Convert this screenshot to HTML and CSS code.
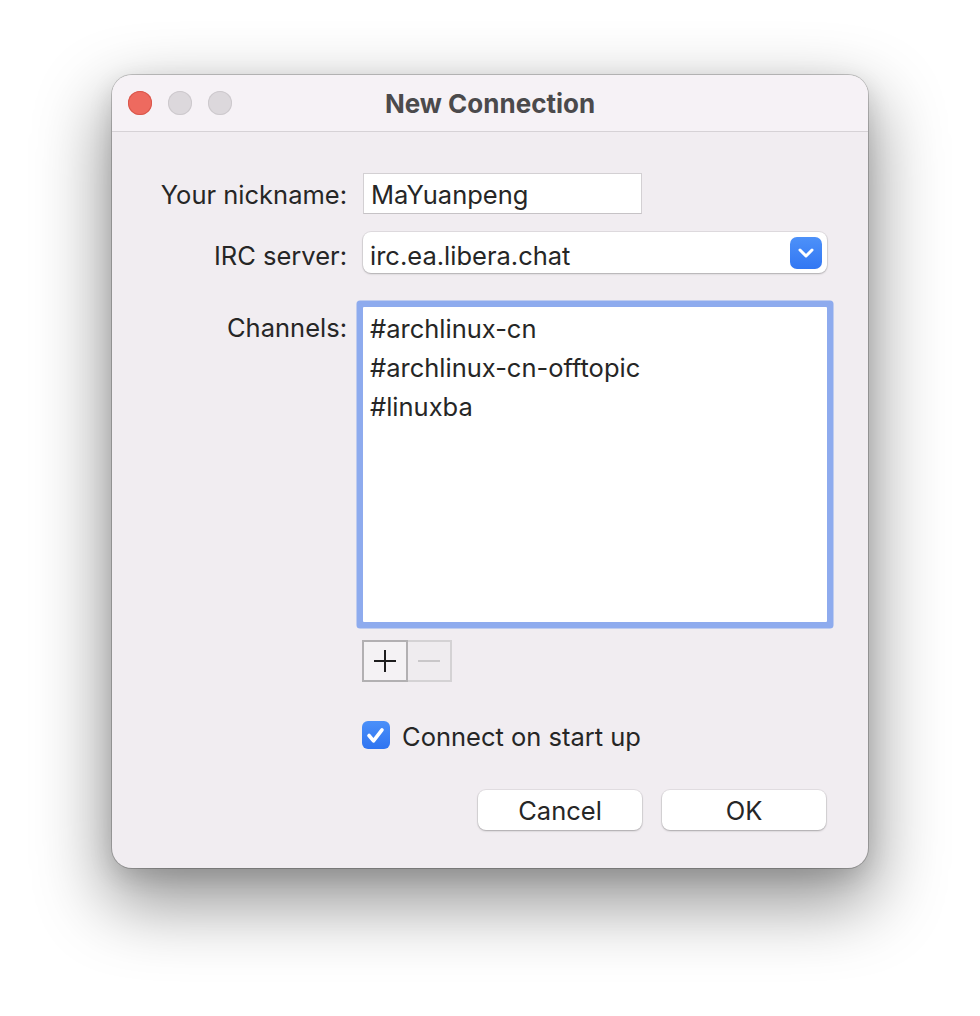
FILE: index.html
```html
<!DOCTYPE html>
<html lang="en">
<head>
<meta charset="utf-8">
<title>New Connection</title>
<link rel="stylesheet" href="styles.css">
</head>
<body>
<div class="stage">
  <div class="window">
    <div class="titlebar">
      <div class="lights">
        <span class="light close"></span>
        <span class="light"></span>
        <span class="light"></span>
      </div>
      <div class="title">New Connection</div>
      <div></div>
    </div>
    <div class="content">
      <div class="row row-nick">
        <div class="label">Your nickname:</div>
        <div class="field nick">MaYuanpeng</div>
      </div>
      <div class="row row-server">
        <div class="label">IRC server:</div>
        <div class="combo">
          <span class="combo-text">irc.ea.libera.chat</span>
          <span class="combo-btn">
            <svg width="16" height="10" viewBox="0 0 16 10"><path d="M2 2 L8 8 L14 2" fill="none" stroke="#fff" stroke-width="3" stroke-linecap="round" stroke-linejoin="round"/></svg>
          </span>
        </div>
      </div>
      <div class="row row-channels">
        <div class="label label-top">Channels:</div>
        <div class="list">
          <div class="item">#archlinux-cn</div>
          <div class="item">#archlinux-cn-offtopic</div>
          <div class="item">#linuxba</div>
        </div>
      </div>
      <div class="row row-tools">
        <div></div>
        <div class="tools">
          <span class="tool plus">
            <svg width="24" height="24" viewBox="0 0 24 24"><path d="M12 1 V23 M1 12 H23" stroke="#1d1d1d" stroke-width="2"/></svg>
          </span>
          <span class="tool minus">
            <svg width="24" height="24" viewBox="0 0 24 24"><path d="M1 12 H23" stroke="#c9c7c9" stroke-width="2"/></svg>
          </span>
        </div>
      </div>
      <div class="row row-check">
        <div></div>
        <div class="check-wrap">
          <span class="checkbox">
            <svg width="28" height="28" viewBox="0 0 28 28"><path d="M7 14.5 L11.5 19.8 L20 8.8" fill="none" stroke="#fff" stroke-width="3.6" stroke-linecap="round" stroke-linejoin="round"/></svg>
          </span>
          <span class="check-label">Connect on start up</span>
        </div>
      </div>
      <div class="buttons">
        <button class="btn">Cancel</button>
        <button class="btn">OK</button>
      </div>
    </div>
  </div>
</div>
</body>
</html>
```
FILE: styles.css
```css
html, body {
  margin: 0;
  background: #ffffff;
}
body {
  font-family: Inter, "Liberation Sans", "Noto Sans", sans-serif;
  color: #262626;
  min-height: 1016px;
}
.stage {
  padding: 75px 0 148px 112px;
}
.window {
  width: 756px;
  height: 793px;
  border-radius: 20px;
  background: #f1edf1;
  box-shadow: 0 0 0 1px rgba(0, 0, 0, 0.2), 0 30px 70px 6px rgba(0, 0, 0, 0.42), 0 8px 24px rgba(0, 0, 0, 0.12);
  overflow: hidden;
  display: flex;
  flex-direction: column;
}
.titlebar {
  height: 56px;
  border-bottom: 1px solid #d6d2d6;
  background: #f6f2f6;
  display: grid;
  grid-template-columns: 1fr auto 1fr;
  align-items: center;
}
.lights {
  display: flex;
  gap: 16px;
  padding-left: 16px;
}
.light {
  width: 24px;
  height: 24px;
  border-radius: 50%;
  background: #dcd8dc;
  box-shadow: inset 0 0 0 1px #cdc9cd;
}
.light.close {
  background: #ee6a5f;
  box-shadow: inset 0 0 0 1px #d9574c;
}
.title {
  font-size: 26px;
  font-weight: 700;
  color: #4b4a4c;
  padding-top: 1px;
}
.content {
  padding: 41px 41px 0 0;
  display: flex;
  flex-direction: column;
}
.row {
  display: grid;
  grid-template-columns: 235px 1fr;
  column-gap: 16px;
  align-items: center;
}
.label {
  text-align: right;
  font-size: 25.5px;
  line-height: 41px;
  padding-top: 1px;
  box-sizing: border-box;
  height: 41px;
}
.label-top {
  line-height: 39px;
  padding-top: 1px;
  align-self: start;
}
.field {
  box-sizing: border-box;
  height: 41px;
  background: #fff;
  border: 1px solid #d3d0d3;
  border-bottom-color: #c6c3c6;
  padding: 3px 0 0 7px;
  font-size: 25.5px;
  line-height: 36px;
}
.nick {
  width: 279px;
}
.row-server {
  margin-top: 18px;
}
.row-server .label {
  padding-top: 3px;
}
.combo {
  box-sizing: border-box;
  height: 41px;
  background: #fff;
  border-radius: 8px;
  box-shadow: 0 0 0 1px rgba(0, 0, 0, 0.07), 0 1px 2px rgba(0, 0, 0, 0.22);
  display: flex;
  align-items: center;
  justify-content: space-between;
  padding: 0 5px 0 7px;
}
.combo-text {
  font-size: 25.5px;
  padding-top: 5px;
}
.combo-btn {
  width: 32px;
  height: 32px;
  border-radius: 7px;
  background: linear-gradient(#4d91f9, #3277f3);
  display: flex;
  align-items: center;
  justify-content: center;
}
.row-channels {
  margin-top: 34px;
  align-items: start;
}
.list {
  box-sizing: border-box;
  height: 315px;
  background: #fff;
  border-radius: 1px;
  box-shadow: 0 0 0 6.5px #8eabee;
  padding: 2px 7px;
}
.item {
  font-size: 25.5px;
  line-height: 39px;
}
.row-tools {
  margin-top: 18px;
}
.tools {
  display: flex;
  margin-left: -1px;
}
.tool {
  box-sizing: border-box;
  height: 42px;
  display: flex;
  align-items: center;
  justify-content: center;
}
.plus {
  width: 46px;
  background: #f4f2f4;
  border: 2px solid #b2b0b2;
}
.minus {
  width: 44px;
  background: #efecef;
  border: 2px solid #d4d2d4;
  border-left: none;
}
.row-check {
  margin-top: 38px;
}
.check-wrap {
  display: flex;
  align-items: center;
  gap: 12px;
  margin-left: -1px;
  height: 30px;
}
.checkbox {
  width: 28px;
  height: 28px;
  border-radius: 6px;
  background: linear-gradient(#4b90f9, #2f74f1);
  display: flex;
  align-items: center;
  justify-content: center;
}
.check-label {
  font-size: 25.5px;
  padding-top: 2px;
}
.buttons {
  margin-top: 40px;
  display: flex;
  justify-content: flex-end;
  gap: 20px;
  padding-right: 1px;
}
.btn {
  width: 164px;
  height: 40px;
  border: none;
  border-radius: 8px;
  background: #fff;
  box-shadow: 0 0 0 1px rgba(0, 0, 0, 0.06), 0 1px 2px rgba(0, 0, 0, 0.25);
  font-family: inherit;
  font-size: 25.5px;
  color: #262626;
  padding: 0;
}
```
